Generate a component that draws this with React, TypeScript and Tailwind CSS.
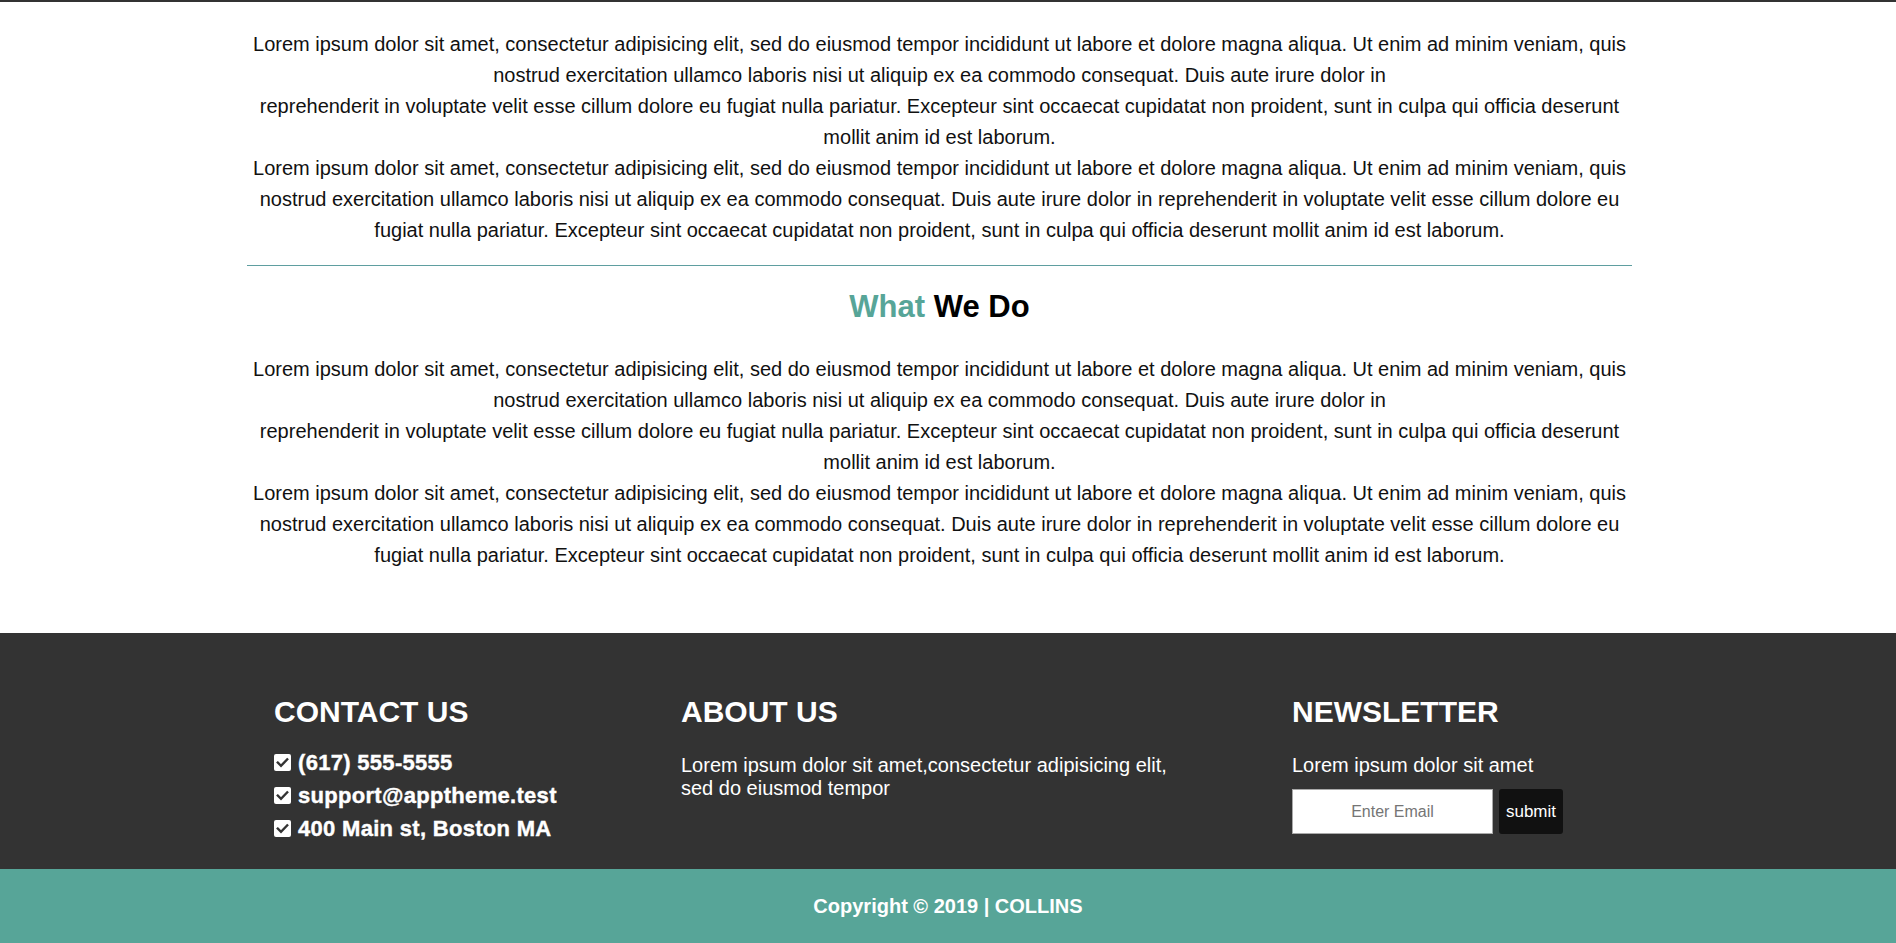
import React from 'react';

const LOREM_A =
  'Lorem ipsum dolor sit amet, consectetur adipisicing elit, sed do eiusmod tempor incididunt ut labore et dolore magna aliqua. Ut enim ad minim veniam, quis nostrud exercitation ullamco laboris nisi ut aliquip ex ea commodo consequat. Duis aute irure dolor in';
const LOREM_B =
  'reprehenderit in voluptate velit esse cillum dolore eu fugiat nulla pariatur. Excepteur sint occaecat cupidatat non proident, sunt in culpa qui officia deserunt mollit anim id est laborum.';
const LOREM_FULL =
  'Lorem ipsum dolor sit amet, consectetur adipisicing elit, sed do eiusmod tempor incididunt ut labore et dolore magna aliqua. Ut enim ad minim veniam, quis nostrud exercitation ullamco laboris nisi ut aliquip ex ea commodo consequat. Duis aute irure dolor in reprehenderit in voluptate velit esse cillum dolore eu fugiat nulla pariatur. Excepteur sint occaecat cupidatat non proident, sunt in culpa qui officia deserunt mollit anim id est laborum.';

// 文字區塊（兩段）
const TextBlock: React.FC = () => (
  <div>
    <p>
      {LOREM_A}
      <br />
      {LOREM_B}
    </p>
    <p>{LOREM_FULL}</p>
  </div>
);

// 勾選方塊圖示
const CheckSquare: React.FC = () => (
  <svg width="17" height="17" viewBox="0 0 17 17" className="shrink-0">
    <rect x="0" y="0" width="17" height="17" rx="2" fill="#ffffff" />
    <path d="M3.8 8.6 L7 11.8 L13.2 5.4" fill="none" stroke="#333333" strokeWidth="2.4" strokeLinecap="square" />
  </svg>
);

const contacts = ['(617) 555-5555', 'support@apptheme.test', '400 Main st, Boston MA'];

const App: React.FC = () => {
  return (
    <div className="min-h-screen bg-white font-['Liberation_Sans',Arial,sans-serif]">
      {/* 頂部細線 */}
      <div className="h-[2px] bg-[#333333]" />

      <main className="w-[1879px]">
        <div className="mx-auto w-[1385px] pt-[27px] pb-[62px] text-center text-[20px] leading-[31px] text-[#111111]">
          <TextBlock />
          <hr className="mt-[19px] border-0 border-t border-[#5f9ea0]" />
          <h2 className="mt-[23px] text-[31px] font-bold leading-[35px] text-black">
            <span className="text-[#57a598]">What</span> We Do
          </h2>
          <div className="mt-[30px]">
            <TextBlock />
          </div>
        </div>
      </main>

      <footer>
        <div className="h-[236px] bg-[#333333] text-white">
          <div className="flex pl-[274px] pt-[62px]">
            <div className="w-[407px]">
              <h3 className="text-[30px] font-bold leading-[34px]">CONTACT US</h3>
              <ul className="mt-[17px]">
                {contacts.map((c) => (
                  <li
                    key={c}
                    className="flex h-[33px] items-center gap-[7px] text-[22px] font-bold leading-[33px] tracking-[0.3px] [-webkit-text-stroke:0.4px_#ffffff]"
                  >
                    <CheckSquare />
                    <span>{c}</span>
                  </li>
                ))}
              </ul>
            </div>

            <div className="w-[611px]">
              <h3 className="text-[30px] font-bold leading-[34px]">ABOUT US</h3>
              <p className="mt-[25px] w-[505px] text-[20px] leading-[23px]">
                Lorem ipsum dolor sit amet,consectetur adipisicing elit, sed do eiusmod tempor
              </p>
            </div>

            <div>
              <h3 className="text-[30px] font-bold leading-[34px]">NEWSLETTER</h3>
              <p className="mt-[25px] text-[20px] leading-[23px]">Lorem ipsum dolor sit amet</p>
              <form className="mt-[12px] flex gap-[6px]" onSubmit={(e) => e.preventDefault()}>
                <input
                  type="email"
                  placeholder="Enter Email"
                  className="h-[45px] w-[201px] border border-[#a9a9a9] bg-white text-center text-[16px] text-black outline-none placeholder:text-[#757575]"
                />
                <button type="submit" className="h-[45px] w-[64px] rounded-[3px] bg-[#111111] text-[17px] text-white">
                  submit
                </button>
              </form>
            </div>
          </div>
        </div>

        <div className="flex h-[74px] items-center justify-center bg-[#57a598] text-[20px] font-bold text-white">
          Copyright © 2019 | COLLINS
        </div>
      </footer>
    </div>
  );
};

export default App;
